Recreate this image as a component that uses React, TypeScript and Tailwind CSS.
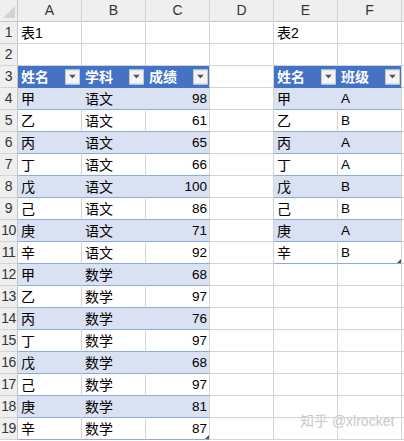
import React from "react";

const GRID = "#d4d4d4";
const BAND = "#d9e1f2";
const HEAD = "#4472c4";
const TLINE = "#8ea9db";

type Cell = {
  text?: string;
  align?: "left" | "right";
  kind?: "empty" | "head" | "band" | "plain" | "title";
  last?: boolean;
  dropdown?: boolean;
  handle?: boolean;
  latin?: boolean;
};

const t1: [string, string, string][] = [
  ["甲", "语文", "98"],
  ["乙", "语文", "61"],
  ["丙", "语文", "65"],
  ["丁", "语文", "66"],
  ["戊", "语文", "100"],
  ["己", "语文", "86"],
  ["庚", "语文", "71"],
  ["辛", "语文", "92"],
  ["甲", "数学", "68"],
  ["乙", "数学", "97"],
  ["丙", "数学", "76"],
  ["丁", "数学", "97"],
  ["戊", "数学", "68"],
  ["己", "数学", "97"],
  ["庚", "数学", "81"],
  ["辛", "数学", "87"],
];

const t2: [string, string][] = [
  ["甲", "A"],
  ["乙", "B"],
  ["丙", "A"],
  ["丁", "A"],
  ["戊", "B"],
  ["己", "B"],
  ["庚", "A"],
  ["辛", "B"],
];

function buildRow(r: number): Cell[] {
  const cells: Cell[] = [];
  const empty: Cell = { kind: "empty" };
  if (r === 1) {
    cells.push({ text: "表1", kind: "title" }, empty, empty);
  } else if (r === 3) {
    cells.push(
      { text: "姓名", kind: "head", dropdown: true },
      { text: "学科", kind: "head", dropdown: true },
      { text: "成绩", kind: "head", dropdown: true, last: true }
    );
  } else if (r >= 4 && r <= 19) {
    const d = t1[r - 4];
    const k = r % 2 === 0 ? "band" : "plain";
    cells.push(
      { text: d[0], kind: k },
      { text: d[1], kind: k },
      { text: d[2], kind: k, align: "right", last: true, latin: true, handle: r === 19 }
    );
  } else {
    cells.push(empty, empty, empty);
  }
  cells.push(empty);
  if (r === 1) {
    cells.push({ text: "表2", kind: "title" }, empty);
  } else if (r === 3) {
    cells.push(
      { text: "姓名", kind: "head", dropdown: true },
      { text: "班级", kind: "head", dropdown: true, last: true }
    );
  } else if (r >= 4 && r <= 11) {
    const d = t2[r - 4];
    const k = r % 2 === 0 ? "band" : "plain";
    cells.push(
      { text: d[0], kind: k },
      { text: d[1], kind: k, last: true, latin: true, handle: r === 11 }
    );
  } else {
    cells.push(empty, empty);
  }
  return cells;
}

function Dropdown() {
  return (
    <span className="absolute right-[1px] top-1/2 -translate-y-1/2 w-[15px] h-[15px] border border-[#c9c9c9] bg-[#f4f4f4] flex items-center justify-center">
      <svg width="7" height="4" viewBox="0 0 7 4">
        <path d="M0 0 L7 0 L3.5 4 Z" fill="#555" />
      </svg>
    </span>
  );
}

function DataCell({ c }: { c: Cell }) {
  let bg = "#ffffff";
  let right = GRID;
  let bottom = GRID;
  let color = "#000";
  let weight = 400;
  if (c.kind === "head") {
    bg = HEAD;
    right = c.last ? GRID : HEAD;
    bottom = HEAD;
    color = "#fff";
    weight = 700;
  } else if (c.kind === "band") {
    bg = BAND;
    right = c.last ? GRID : BAND;
    bottom = TLINE;
  } else if (c.kind === "plain") {
    bottom = TLINE;
  }
  return (
    <div
      className="relative h-[22px] flex items-center overflow-visible whitespace-nowrap border-r border-b"
      style={{
        background: bg,
        borderRightColor: right,
        borderBottomColor: bottom,
        color,
        fontWeight: weight,
        justifyContent: c.align === "right" ? "flex-end" : "flex-start",
        paddingLeft: c.align === "right" ? 0 : 3,
        paddingRight: c.align === "right" ? 2 : 0,
      }}
    >
      {c.text && (
        <span className={c.latin ? "text-[13.5px] leading-none" : "text-[14px] leading-none"}>{c.text}</span>
      )}
      {c.dropdown && <Dropdown />}
      {c.handle && (
        <span className="absolute right-0 bottom-0 w-0 h-0 border-l-[4px] border-l-transparent border-b-[4px] border-b-[#2f4f9a]" />
      )}
    </div>
  );
}

export default function App() {
  const cols = ["A", "B", "C", "D", "E", "F"];
  const rows = Array.from({ length: 19 }, (_, i) => i + 1);
  return (
    <div
      className="relative w-[404px] h-[441px] overflow-hidden bg-white"
      style={{ fontFamily: '"Liberation Sans", "Noto Sans CJK SC", sans-serif' }}
    >
      <div className="grid grid-cols-[18px_64px_64px_64px_64px_64px_64px_2px] auto-rows-[22px]">
        <div className="relative h-[22px] bg-[#efefef] border-r border-b border-[#c6c6c6]">
          <span className="absolute right-[2px] bottom-[3px] w-0 h-0 border-l-[12px] border-l-transparent border-b-[12px] border-b-[#d2d2d2]" />
        </div>
        {cols.map((c) => (
          <div
            key={c}
            className="h-[22px] bg-[#efefef] border-r border-b border-r-[#d4d4d4] border-b-[#c6c6c6] flex items-center justify-center text-[14px] text-[#333]"
          >
            {c}
          </div>
        ))}
        <div className="h-[22px] bg-[#efefef] border-b border-[#c6c6c6]" />
        {rows.map((r) => (
          <React.Fragment key={r}>
            <div className="h-[22px] bg-[#efefef] border-r border-b border-r-[#c6c6c6] border-b-[#d4d4d4] flex items-center justify-center text-[14px] tracking-[-0.5px] text-[#333]">
              {r}
            </div>
            {buildRow(r).map((c, i) => (
              <DataCell key={i} c={c} />
            ))}
            <div className="h-[22px] border-b border-[#d4d4d4]" />
          </React.Fragment>
        ))}
      </div>
      <div
        className="absolute left-[300px] top-[411px] text-[14px] text-[#c8c8c8] whitespace-nowrap"
        style={{ textShadow: "0 0 1px #fff" }}
      >
        知乎 @xlrocket
      </div>
    </div>
  );
}
